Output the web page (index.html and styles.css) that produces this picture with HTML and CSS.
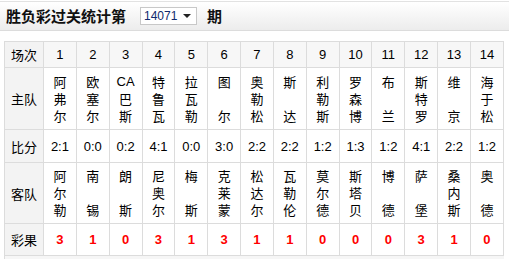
FILE: index.html
```html
<!DOCTYPE html>
<html>
<head>
<meta charset="utf-8">
<link rel="stylesheet" href="styles.css">
</head>
<body>
<div class="bar">
  <span class="title">胜负彩过关统计第</span>
  <span class="sel">14071<i class="arrow"></i></span>
  <span class="title">期</span>
</div>
<table class="grid">
  <tr class="r-head">
    <th>场次</th><td>1</td><td>2</td><td>3</td><td>4</td><td>5</td><td>6</td><td>7</td><td>8</td><td>9</td><td>10</td><td>11</td><td>12</td><td>13</td><td>14</td>
  </tr>
  <tr class="r-team">
    <th>主队</th>
    <td><div class="nm"><span>阿</span><span>弗</span><span>尔</span></div></td>
    <td><div class="nm"><span>欧</span><span>塞</span><span>尔</span></div></td>
    <td><div class="nm"><span class="lat">CA</span><span>巴</span><span>斯</span></div></td>
    <td><div class="nm"><span>特</span><span>鲁</span><span>瓦</span></div></td>
    <td><div class="nm"><span>拉</span><span>瓦</span><span>勒</span></div></td>
    <td><div class="nm"><span>图</span><span>尔</span></div></td>
    <td><div class="nm"><span>奥</span><span>勒</span><span>松</span></div></td>
    <td><div class="nm"><span>斯</span><span>达</span></div></td>
    <td><div class="nm"><span>利</span><span>勒</span><span>斯</span></div></td>
    <td><div class="nm"><span>罗</span><span>森</span><span>博</span></div></td>
    <td><div class="nm"><span>布</span><span>兰</span></div></td>
    <td><div class="nm"><span>斯</span><span>特</span><span>罗</span></div></td>
    <td><div class="nm"><span>维</span><span>京</span></div></td>
    <td><div class="nm"><span>海</span><span>于</span><span>松</span></div></td>
  </tr>
  <tr class="r-score">
    <th>比分</th><td>2:1</td><td>0:0</td><td>0:2</td><td>4:1</td><td>0:0</td><td>3:0</td><td>2:2</td><td>2:2</td><td>1:2</td><td>1:3</td><td>1:2</td><td>4:1</td><td>2:2</td><td>1:2</td>
  </tr>
  <tr class="r-team r-away">
    <th>客队</th>
    <td><div class="nm"><span>阿</span><span>尔</span><span>勒</span></div></td>
    <td><div class="nm"><span>南</span><span>锡</span></div></td>
    <td><div class="nm"><span>朗</span><span>斯</span></div></td>
    <td><div class="nm"><span>尼</span><span>奥</span><span>尔</span></div></td>
    <td><div class="nm"><span>梅</span><span>斯</span></div></td>
    <td><div class="nm"><span>克</span><span>莱</span><span>蒙</span></div></td>
    <td><div class="nm"><span>松</span><span>达</span><span>尔</span></div></td>
    <td><div class="nm"><span>瓦</span><span>勒</span><span>伦</span></div></td>
    <td><div class="nm"><span>莫</span><span>尔</span><span>德</span></div></td>
    <td><div class="nm"><span>斯</span><span>塔</span><span>贝</span></div></td>
    <td><div class="nm"><span>博</span><span>德</span></div></td>
    <td><div class="nm"><span>萨</span><span>堡</span></div></td>
    <td><div class="nm"><span>桑</span><span>内</span><span>斯</span></div></td>
    <td><div class="nm"><span>奥</span><span>德</span></div></td>
  </tr>
  <tr class="r-res">
    <th>彩果</th><td>3</td><td>1</td><td>0</td><td>3</td><td>1</td><td>3</td><td>1</td><td>1</td><td>0</td><td>0</td><td>0</td><td>3</td><td>1</td><td>0</td>
  </tr>
</table>
<div class="foot"></div>
</body>
</html>
```
FILE: styles.css
```css
html, body { margin: 0; padding: 0; background: #fff; }
body {
  font-family: "Liberation Sans", Arial, "Noto Sans CJK SC", sans-serif;
  font-size: 13px;
  color: #000;
}
.bar {
  margin-top: 1px;
  height: 28px;
  border-top: 1px solid #e2e2e2;
  border-bottom: 1px solid #dcdcdc;
  background: linear-gradient(#ffffff, #ececec);
  display: flex;
  align-items: center;
  padding-left: 6px;
}
.title {
  font-family: "Noto Sans CJK SC", sans-serif;
  font-weight: bold;
  font-size: 15px;
  line-height: 18px;
  color: #111;
}
.sel {
  margin-left: 14px;
  margin-right: 10px;
  width: 52px;
  height: 16px;
  border: 1px solid #c8c8c8;
  background: #fff;
  display: flex;
  align-items: center;
  padding-left: 3px;
  box-sizing: content-box;
  font-size: 12px;
  color: #102a6e;
  position: relative;
}
.arrow {
  margin-left: 6px;
  width: 0; height: 0;
  border-left: 4px solid transparent;
  border-right: 4px solid transparent;
  border-top: 4px solid #222;
}
.grid {
  margin: 10px 0 0 4px;
  width: 500px;
  border-collapse: collapse;
  table-layout: fixed;
}
.grid th, .grid td {
  border: 1px solid #dcdcdc;
  text-align: center;
  vertical-align: middle;
  padding: 0;
}
.grid th {
  width: 38px;
  background: #f3f3f3;
  font-family: "Noto Sans CJK SC", sans-serif;
  font-weight: normal;
  font-size: 13px;
}
.r-head td { background: #f7f7f7; }
.r-head { height: 26px; }
.r-team { height: 62px; }
.r-away { height: 61px; }
.r-score { height: 33px; }
.r-res { height: 32px; }
.nm {
  height: 50px;
  display: flex;
  flex-direction: column;
  justify-content: space-between;
  align-items: center;
  font-family: "Noto Sans CJK SC", sans-serif;
  font-size: 13px;
  line-height: 16px;
}
.nm .lat { font-family: "Liberation Sans", Arial, sans-serif; }
.r-res td { color: #f00; font-weight: bold; }
.foot {
  margin-left: 4px;
  width: 499px;
  height: 8px;
  background: #f6f6f6;
  border-left: 1px solid #dcdcdc;
}
```
